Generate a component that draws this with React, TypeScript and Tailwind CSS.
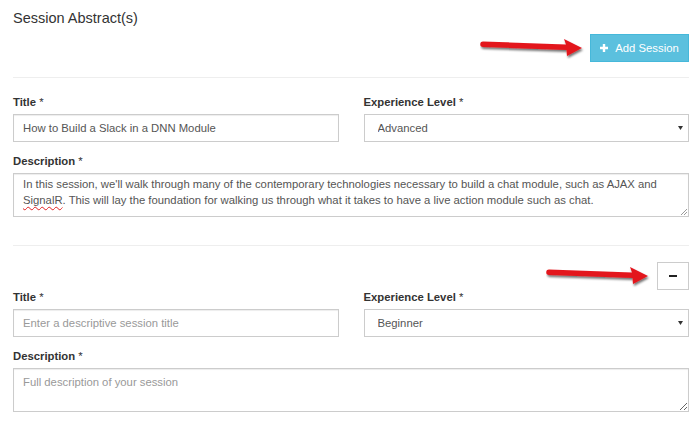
import React from "react";

function Arrow({ id, className }: { id: string; className: string }) {
  return (
    <svg
      aria-hidden="true"
      className={className}
      width="108"
      height="26"
      viewBox="0 0 108 26"
    >
      <defs>
        <filter id={id} x="-10%" y="-40%" width="130%" height="200%">
          <feDropShadow dx="1" dy="2" stdDeviation="1.2" floodColor="#000" floodOpacity="0.55" />
        </filter>
      </defs>
      <path
        d="M3 3.5 L86 6.5 L84 1 L102 10 L87 18 L86.5 12 L3 9 A2.75 2.75 0 0 1 3 3.5 Z"
        fill="#e3161c"
        filter={`url(#${id})`}
      />
    </svg>
  );
}

function Caret() {
  return (
    <svg
      aria-hidden="true"
      className="pointer-events-none absolute right-[6px] top-1/2 -translate-y-1/2"
      width="5"
      height="4"
      viewBox="0 0 5 4"
    >
      <path d="M0 0h5L2.5 4z" fill="#333" />
    </svg>
  );
}

function Grip() {
  return (
    <svg
      aria-hidden="true"
      className="absolute bottom-[1px] right-[1px]"
      width="7"
      height="7"
      viewBox="0 0 7 7"
    >
      <path d="M7 1L1 7M7 4L4 7" stroke="#9a9a9a" strokeWidth="1" />
    </svg>
  );
}

function Label({ children }: { children: React.ReactNode }) {
  return (
    <label className="mb-[5px] block text-[11.3px] font-bold leading-[13px] text-[#333]">
      {children} <span className="font-normal">*</span>
    </label>
  );
}

const inputCls =
  "block h-[28px] w-full border border-[#ccc] bg-white px-[9px] text-[11.3px] text-[#555] shadow-[inset_0_1px_1px_rgba(0,0,0,0.075)] outline-none placeholder:text-[#999]";

function LevelSelect({ value }: { value: string }) {
  return (
    <div className="relative">
      <select
        defaultValue={value}
        className="block h-[28px] w-full appearance-none border border-[#ccc] bg-white pl-[13px] text-[11.3px] text-[#555] outline-none"
      >
        <option>Beginner</option>
        <option>Intermediate</option>
        <option>Advanced</option>
      </select>
      <Caret />
    </div>
  );
}

export default function App() {
  return (
    <div className="relative h-[428px] w-[700px] overflow-hidden bg-white pl-[13px] pr-[11px] pt-[10px] font-['Liberation_Sans',Arial,sans-serif] text-[#333]">
      <h3 className="text-[14.5px] font-normal leading-[17px]">Session Abstract(s)</h3>

      <div className="mt-[7px] flex justify-end">
        <button className="flex h-[28px] w-[99px] items-center justify-center gap-[7px] border border-[#46b8da] bg-[#5bc0de] text-[11.3px] text-white">
          <svg aria-hidden="true" width="8" height="8" viewBox="0 0 8 8">
            <path d="M2.8 0h2.4v8H2.8zM0 2.8h8v2.4H0z" fill="#fff" />
          </svg>
          Add Session
        </button>
      </div>

      <div className="mt-[15px] h-px bg-[#eee]" />

      {/* first session */}
      <div className="grid grid-cols-2 gap-x-[25px] pt-[18px]">
        <div>
          <Label>Title</Label>
          <input className={inputCls} defaultValue="How to Build a Slack in a DNN Module" />
        </div>
        <div>
          <Label>Experience Level</Label>
          <LevelSelect value="Advanced" />
        </div>
        <div className="col-span-2 mt-[13px]">
          <Label>Description</Label>
          <div className="relative h-[44px] border border-[#ccc] px-[9px] pt-[2px] text-[11.3px] leading-[16px] text-[#555] shadow-[inset_0_1px_1px_rgba(0,0,0,0.075)]">
            In this session, we'll walk through many of the contemporary technologies necessary to build a chat module, such as AJAX and
            <br />
            <span className="underline decoration-[#e02020] decoration-wavy decoration-1 underline-offset-2">SignalR</span>. This will lay the foundation for walking us through what it takes to have a live action module such as chat.
            <Grip />
          </div>
        </div>
      </div>

      <div className="mt-[28px] h-px bg-[#eee]" />

      <div className="mt-[16px] flex justify-end">
        <button className="flex h-[28px] w-[32px] items-center justify-center border border-[#ccc] bg-white">
          <span className="block h-[2px] w-[8px] bg-[#222]" />
        </button>
      </div>

      {/* second session */}
      <div className="mt-[1px] grid grid-cols-2 gap-x-[25px]">
        <div>
          <Label>Title</Label>
          <input className={inputCls} placeholder="Enter a descriptive session title" />
        </div>
        <div>
          <Label>Experience Level</Label>
          <LevelSelect value="Beginner" />
        </div>
        <div className="col-span-2 mt-[13px]">
          <Label>Description</Label>
          <textarea
            className="block h-[44px] w-full border border-[#ccc] px-[9px] pt-[5px] text-[11.3px] leading-[16px] text-[#555] shadow-[inset_0_1px_1px_rgba(0,0,0,0.075)] outline-none placeholder:text-[#999]"
            placeholder="Full description of your session"
          />
        </div>
      </div>

      <Arrow id="arrow-a" className="absolute left-[480px] top-[38px]" />
      <Arrow id="arrow-b" className="absolute left-[546px] top-[266px]" />
    </div>
  );
}
